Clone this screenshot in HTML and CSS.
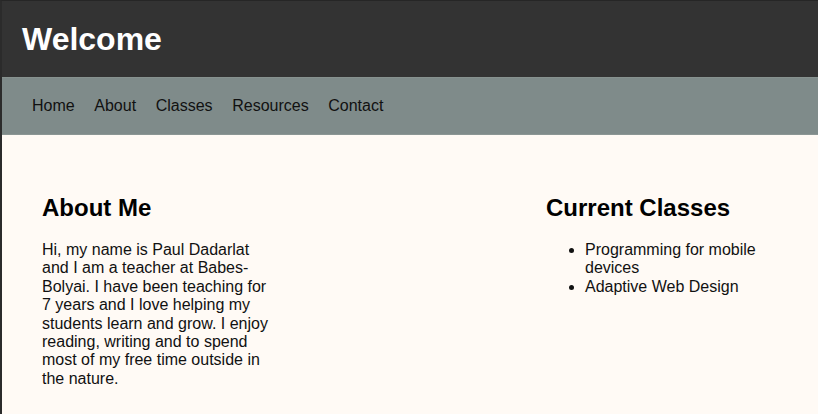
FILE: index.html
```html
<html>
<head>
    <link rel="stylesheet" href="styles.css">
</head>
<body>
    <header class="header">
        <h1>Welcome</h1>
    </header>
    <nav class="nav">
        <a href="#">Home</a>
        <a href="#">About</a>
        <a href="#">Classes</a>
        <a href="#">Resources</a>
        <a href="#">Contact</a>
    </nav>
    <main class="main">
        <section class="column">
            <h2>About Me</h2>
            <p>Hi, my name is Paul Dadarlat and I am a teacher at Babes-Bolyai. I have been teaching for 7 years and I love helping my students learn and grow. I enjoy reading, writing and to spend most of my free time outside in the nature.</p>
        </section>
        <section class="column">
            <h2>Current Classes</h2>
            <ul>
                <li>Programming for mobile devices</li>
                <li>Adaptive Web Design</li>
            </ul>
        </section>
    </main>
</body>
</html>
```

FILE: styles.css
```css
body {
    font-family: "Liberation Sans", Arial, sans-serif;
    margin: 0;
    background-color: #fffaf5;
    border-left: 2px solid #2b2b2b;
    border-top: 1px solid #262626;
    min-height: 100vh;
    box-sizing: border-box;
    color: #111;
}
.header {
    background-color: #333333;
    padding: 20px;
    height: 76px;
    box-sizing: border-box;
    display: flex;
    align-items: center;
}
.header h1 {
    margin: 0;
    color: #fff;
    font-size: 32px;
}
.nav {
    background-color: #7f8b8a;
    height: 58px;
    box-sizing: border-box;
    padding: 0 30px;
    display: flex;
    align-items: center;
    gap: 19.6px;
    border-top: 1px solid #87928f;
    border-bottom: 1px solid #8b9694;
}
.nav a {
    color: #111;
    text-decoration: none;
    font-size: 16px;
}
.main {
    display: flex;
    justify-content: space-between;
    padding: 40px;
}
.column {
    width: 232px;
}
.column h2 {
    font-size: 24px;
    margin: 19px 0 19px;
    color: #000;
}
.column p {
    margin: 0;
    font-size: 16px;
    line-height: 18.4px;
}
.column ul {
    margin: 0;
    padding-left: 39px;
    line-height: 18.4px;
}
```
